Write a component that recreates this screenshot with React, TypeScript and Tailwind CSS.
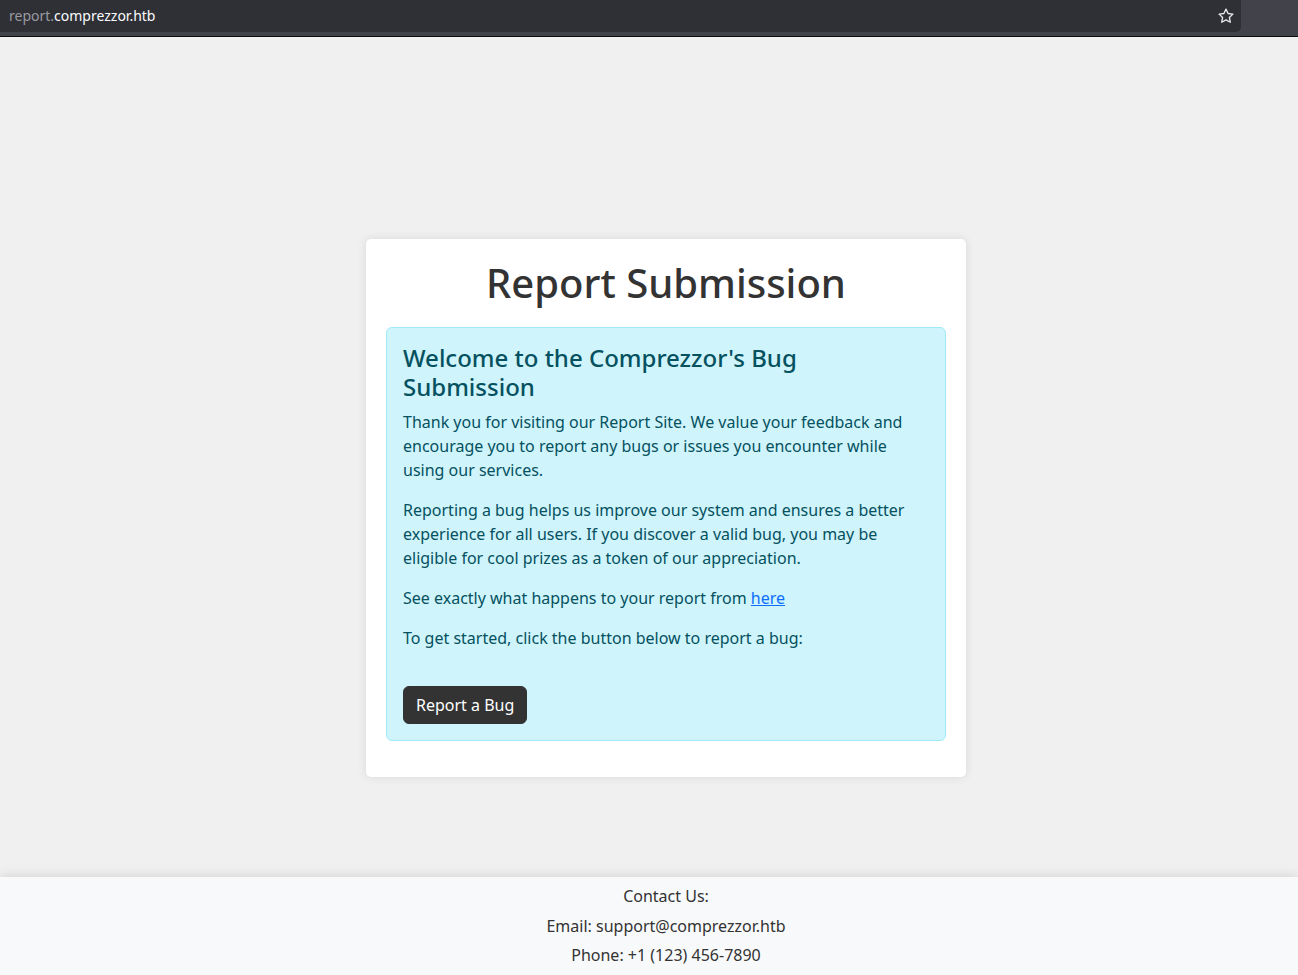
import React from "react";

export default function App() {
  const font = { fontFamily: '"Noto Sans", "Open Sans", sans-serif' };
  return (
    <div className="flex h-screen flex-col overflow-hidden bg-[#f0f0f0]" style={font}>
      {/* browser chrome */}
      <div className="flex h-[37px] shrink-0 flex-col bg-[#42434a]">
        <div className="flex h-[32px] w-[1241px] items-center justify-between rounded-br-[5px] bg-[#2f3036] pl-[9px] pr-[6px]">
          <div className="text-[14px] leading-none text-[#fbfbfe]">
            <span className="text-[#9a9aa0]">report.</span>comprezzor.htb
          </div>
          <svg width="18" height="18" viewBox="0 0 24 24" fill="none" stroke="#e8e8ec" strokeWidth="1.8" strokeLinejoin="round">
            <path d="M12 2.8l2.8 5.9 6.4.8-4.7 4.4 1.2 6.4L12 17.2l-5.7 3.1 1.2-6.4-4.7-4.4 6.4-.8z" />
          </svg>
        </div>
        <div className="flex-1" />
        <div className="h-px bg-[#0c0c0d]" />
      </div>

      {/* main */}
      <main className="flex flex-1 justify-center pl-[34px] pt-[202px]">
        <div className="h-fit w-[600px] rounded-[5px] bg-white p-5 shadow-[0_0_10px_rgba(0,0,0,0.1)]">
          <h1 className="mb-5 text-center text-[40px] leading-[1.2] font-medium text-[#333]">Report Submission</h1>
          <div className="mb-4 rounded-[6px] border border-[#9eeaf9] bg-[#cff4fc] p-4 text-[16px] leading-6 text-[#055160]">
            <h4 className="mb-2 text-[24px] leading-[1.2] font-medium">Welcome to the Comprezzor's Bug Submission</h4>
            <p className="mb-4">
              Thank you for visiting our Report Site. We value your feedback and encourage you to report any bugs or issues you encounter while using our services.
            </p>
            <p className="mb-4">
              Reporting a bug helps us improve our system and ensures a better experience for all users. If you discover a valid bug, you may be eligible for cool prizes as a token of our appreciation.
            </p>
            <p className="mb-4">
              See exactly what happens to your report from{" "}
              <a href="#" className="text-[#0d6efd] underline">here</a>
            </p>
            <p className="mb-9">To get started, click the button below to report a bug:</p>
            <button className="rounded-[6px] border border-[#333] bg-[#333] px-3 py-1.5 text-[16px] leading-6 text-white">
              Report a Bug
            </button>
          </div>
        </div>
      </main>

      {/* footer */}
      <footer className="relative shrink-0 bg-[#f8f9fa] pl-[34px] text-center text-[16px] leading-[1.2] text-[#333] shadow-[0_-2px_10px_rgba(0,0,0,0.1)]">
        <div className="py-[10px]">
          <p>Contact Us:</p>
          <p className="mt-[10px]">Email: support@comprezzor.htb</p>
          <p className="mt-[10px]">Phone: +1 (123) 456-7890</p>
        </div>
      </footer>
    </div>
  );
}
